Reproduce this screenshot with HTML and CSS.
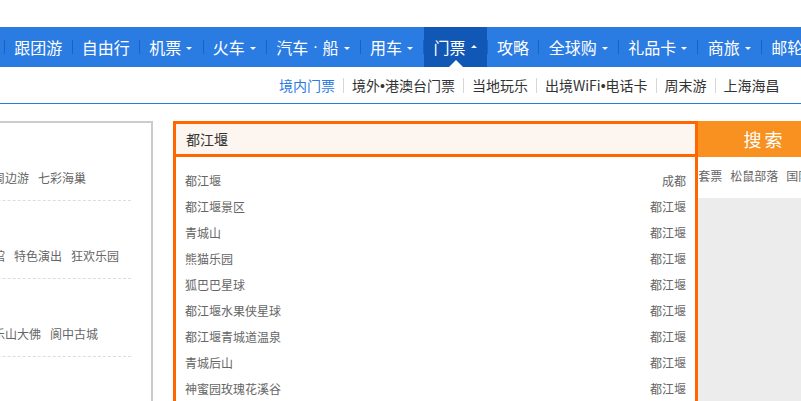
FILE: index.html
```html
<!DOCTYPE html>
<html>

<head>
    <meta charset="utf-8">
    <link rel="stylesheet" href="styles.css">
</head>

<body>
    <!-- main nav -->
    <div class="nav">
        <div class="nav-inner">
            <a class="nav-item">首页</a>
            <span class="sep"></span>
            <a class="nav-item">跟团游</a>
            <span class="sep"></span>
            <a class="nav-item">自由行</a>
            <span class="sep"></span>
            <a class="nav-item">机票<i class="arrow"></i></a>
            <span class="sep"></span>
            <a class="nav-item">火车<i class="arrow"></i></a>
            <span class="sep"></span>
            <a class="nav-item">汽车<span class="dot"> · </span>船<i class="arrow"></i></a>
            <span class="sep"></span>
            <a class="nav-item">用车<i class="arrow"></i></a>
            <span class="sep"></span>
            <a class="nav-item active">门票<i class="arrow up"></i></a>
            <span class="sep"></span>
            <a class="nav-item">攻略</a>
            <span class="sep"></span>
            <a class="nav-item">全球购<i class="arrow"></i></a>
            <span class="sep"></span>
            <a class="nav-item">礼品卡<i class="arrow"></i></a>
            <span class="sep"></span>
            <a class="nav-item">商旅<i class="arrow"></i></a>
            <span class="sep"></span>
            <a class="nav-item">邮轮<i class="arrow"></i></a>
        </div>
    </div>

    <!-- sub nav -->
    <div class="subnav">
        <a class="sub-item current">境内门票</a>
        <span class="sub-sep"></span>
        <a class="sub-item">境外<span class="dot">•</span>港澳台门票</a>
        <span class="sub-sep"></span>
        <a class="sub-item">当地玩乐</a>
        <span class="sub-sep"></span>
        <a class="sub-item">出境WiFi<span class="dot">•</span>电话卡</a>
        <span class="sub-sep"></span>
        <a class="sub-item">周末游</a>
        <span class="sub-sep"></span>
        <a class="sub-item">上海海昌</a>
    </div>

    <div class="main">
        <!-- category panel -->
        <div class="cate">
            <div class="cate-item">
                <div class="cate-links">
                    <a>熊猫基地</a><a>欢乐谷</a><a>周边游</a><a>七彩海巢</a>
                </div>
            </div>
            <div class="cate-item">
                <div class="cate-links">
                    <a>金沙</a><a>武侯祠</a><a>海洋馆</a><a>特色演出</a><a>狂欢乐园</a>
                </div>
            </div>
            <div class="cate-item">
                <div class="cate-links">
                    <a>峨眉山</a><a>青城后山</a><a>乐山大佛</a><a>阆中古城</a>
                </div>
            </div>
        </div>

        <!-- search -->
        <div class="search-wrap">
            <div class="search-bar">
                <input class="search-input" type="text" value="都江堰">
                <button class="search-btn">搜索</button>
            </div>

            <div class="hot-words">
                <a>熊猫基地</a><a>欢乐谷</a><a>青城山</a><a>峨眉山</a><a>九寨沟</a><a>乐山大佛</a><a>海昌极地</a><a>宽窄巷子</a><a>锦里古街</a><a>国色天香</a><a>套票</a><a>松鼠部落</a><a>国际赛车场</a>
            </div>

            <div class="banner"></div>

            <div class="suggest">
                <div class="suggest-row"><span>都江堰</span><span>成都</span></div>
                <div class="suggest-row"><span>都江堰景区</span><span>都江堰</span></div>
                <div class="suggest-row"><span>青城山</span><span>都江堰</span></div>
                <div class="suggest-row"><span>熊猫乐园</span><span>都江堰</span></div>
                <div class="suggest-row"><span>狐巴巴星球</span><span>都江堰</span></div>
                <div class="suggest-row"><span>都江堰水果侠星球</span><span>都江堰</span></div>
                <div class="suggest-row"><span>都江堰青城道温泉</span><span>都江堰</span></div>
                <div class="suggest-row"><span>青城后山</span><span>都江堰</span></div>
                <div class="suggest-row"><span>神蜜园玫瑰花溪谷</span><span>都江堰</span></div>
                <div class="suggest-row"><span>虹口景区</span><span>都江堰</span></div>
            </div>
        </div>
    </div>
</body>

</html>
```

FILE: styles.css
```css
html,
body {
    margin: 0;
    overflow: hidden;
}

body {
    font-family: "Noto Sans CJK SC", "Microsoft YaHei", sans-serif;
    background: #fff;
    color: #333;
}

a {
    text-decoration: none;
    cursor: pointer;
}

.dot {
    font-family: "Liberation Sans", Arial, sans-serif;
    white-space: pre;
}

/* main nav */
.nav {
    margin-top: 27px;
    height: 40px;
    background: #2a7be2;
}

.nav-inner {
    display: flex;
    align-items: center;
    height: 40px;
    margin-left: -46.5px;
    white-space: nowrap;
}

.nav-item {
    position: relative;
    display: flex;
    align-items: center;
    height: 40px;
    padding: 0 9.25px;
    color: #fff;
    font-size: 16px;
    line-height: 40px;
}

.nav-item.active {
    background: #1157b6;
}

.nav-item.active::after {
    content: "";
    position: absolute;
    left: 50%;
    bottom: 0;
    margin-left: -7px;
    border-left: 7px solid transparent;
    border-right: 7px solid transparent;
    border-bottom: 7px solid #fff;
}

.arrow {
    width: 0;
    height: 0;
    margin: 2px 1px 0 5px;
    border-left: 3px solid transparent;
    border-right: 3px solid transparent;
    border-top: 3px solid #fff;
}

.arrow.up {
    margin-top: -2px;
    border-top: none;
    border-bottom: 3px solid #fff;
}

.sep {
    flex: none;
    width: 1px;
    height: 14px;
    background: #1c62c6;
}

/* sub nav */
.subnav {
    display: flex;
    align-items: center;
    height: 36px;
    padding-left: 279px;
    border-bottom: 1px solid #2a7be2;
    white-space: nowrap;
}

.sub-item {
    font-size: 14px;
    line-height: 36px;
    color: #333;
}

.sub-item.current {
    color: #2a7be2;
}

.sub-sep {
    width: 1px;
    height: 15px;
    margin: 0 8px;
    background: #d6d6d6;
}

/* content */
.main {
    display: flex;
    margin-top: 17px;
    margin-left: -190px;
}

.cate {
    flex: none;
    width: 339px;
    height: 320px;
    border: 2px solid #ccc;
}

.cate-item {
    box-sizing: border-box;
    height: 78px;
    margin-right: 20px;
    padding-top: 45px;
    border-bottom: 1px dashed #ddd;
}

.cate-links {
    display: flex;
    gap: 9px;
    padding-left: 79px;
    font-size: 12px;
    line-height: 20px;
    white-space: nowrap;
}

.cate-links a {
    color: #666;
}

.search-wrap {
    position: relative;
    flex: 1;
    margin-left: 20px;
}

.search-bar {
    display: flex;
    height: 36px;
}

.search-input {
    flex: none;
    box-sizing: border-box;
    width: 525px;
    height: 36px;
    margin: 0;
    padding: 0 10px;
    border: 3px solid #f60;
    background: #fcf5f0;
    font-family: "Noto Sans CJK SC", "Microsoft YaHei", sans-serif;
    font-size: 14px;
    color: #333;
    outline: none;
}

.search-btn {
    flex: none;
    width: 130px;
    height: 36px;
    margin: 0;
    padding: 0 0 0 3px;
    border: none;
    background: #f8911f;
    color: #fff;
    font-family: "Noto Sans CJK SC", "Microsoft YaHei", sans-serif;
    font-size: 18px;
    letter-spacing: 3px;
}

.hot-words {
    display: flex;
    gap: 8px;
    height: 41px;
    box-sizing: border-box;
    padding: 9px 0 0 13px;
    font-size: 12px;
    line-height: 20px;
    white-space: nowrap;
    overflow: hidden;
}

.hot-words a {
    color: #666;
}

.banner {
    height: 260px;
    background: #ececec;
}

/* suggestion dropdown */
.suggest {
    position: absolute;
    top: 36px;
    left: 0;
    box-sizing: border-box;
    width: 525px;
    padding: 11px 9px 0;
    border: 3px solid #f60;
    border-top: none;
    background: #fff;
}

.suggest-row {
    display: flex;
    justify-content: space-between;
    font-size: 12px;
    line-height: 26px;
    color: #666;
    cursor: pointer;
}
```
